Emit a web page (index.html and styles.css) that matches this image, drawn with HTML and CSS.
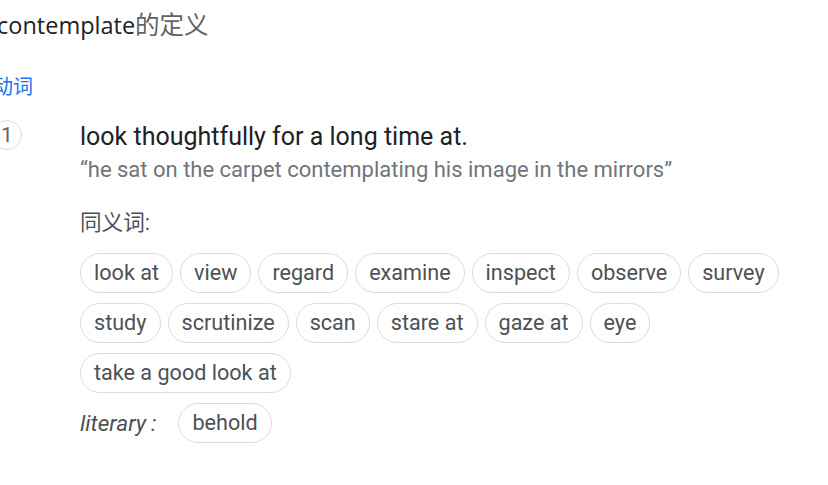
FILE: index.html
```html
<!DOCTYPE html>
<html lang="zh">
<head>
<meta charset="utf-8">
<link rel="stylesheet" href="styles.css">
</head>
<body>
<div class="page">
  <h1 class="title"><span class="word">contemplate</span><span class="suffix">的定义</span></h1>
  <div class="pos">动词</div>
  <div class="sense">
    <div class="num">1</div>
    <div class="body">
      <div class="def">look thoughtfully for a long time at.</div>
      <div class="example">“he sat on the carpet contemplating his image in the mirrors”</div>
      <div class="syn-label">同义词:</div>
      <div class="chips">
        <span class="chip">look at</span>
        <span class="chip">view</span>
        <span class="chip">regard</span>
        <span class="chip">examine</span>
        <span class="chip">inspect</span>
        <span class="chip">observe</span>
        <span class="chip">survey</span>
        <span class="chip">study</span>
        <span class="chip">scrutinize</span>
        <span class="chip">scan</span>
        <span class="chip">stare at</span>
        <span class="chip">gaze at</span>
        <span class="chip">eye</span>
        <span class="chip">take a good look at</span>
      </div>
      <div class="literary">
        <span class="lit-label">literary<span class="colon">:</span></span>
        <span class="chip">behold</span>
      </div>
    </div>
  </div>
</div>
</body>
</html>
```
FILE: styles.css
```css
html, body {
  margin: 0;
  padding: 0;
  background: #fff;
}
body {
  font-family: Roboto, "Noto Sans CJK SC", sans-serif;
  color: #202124;
}
.page {
  margin-left: -3px;
  padding-top: 6px;
}
.title {
  margin: 0;
  font-weight: 400;
  font-size: 23.5px;
  line-height: 36px;
  font-family: "Open Sans", "Noto Sans CJK SC", sans-serif;
}
.title .word { color: #202124; }
.title .suffix {
  color: #5f6368;
  font-family: "Noto Sans CJK SC", sans-serif;
  font-size: 24.5px;
}
.pos {
  margin-top: 30px;
  font-size: 20px;
  line-height: 28px;
  color: #1a73e8;
  margin-left: -4px;
}
.sense {
  display: flex;
  margin-top: 20px;
}
.num {
  flex: none;
  box-sizing: border-box;
  width: 30px;
  height: 30px;
  border: 1px solid #dadce0;
  border-radius: 50%;
  font-size: 21px;
  line-height: 28px;
  text-align: center;
  color: #5f6368;
  margin-left: -5px;
  margin-top: -1px;
}
.body {
  margin-left: 58px;
}
.def {
  font-size: 25px;
  line-height: 32px;
  color: #202124;
}
.example {
  margin-top: 2px;
  font-size: 22px;
  line-height: 30px;
  color: #70757a;
}
.syn-label {
  margin-top: 24px;
  font-size: 21.6px;
  line-height: 28px;
  color: #4d5156;
}
.chips {
  margin-top: 16px;
  display: flex;
  flex-wrap: wrap;
  gap: 10px 7px;
  width: 720px;
}
.chip {
  box-sizing: border-box;
  height: 40px;
  padding: 0 13px;
  border: 1px solid #dadce0;
  border-radius: 20px;
  font-size: 21.6px;
  line-height: 38px;
  color: #4d5156;
  white-space: nowrap;
}
.literary {
  margin-top: 10px;
  display: flex;
  align-items: center;
  gap: 22px;
}
.lit-label {
  font-style: italic;
  font-size: 22.5px;
  color: #4d5156;
}
.colon {
  margin-left: 5px;
}
```
